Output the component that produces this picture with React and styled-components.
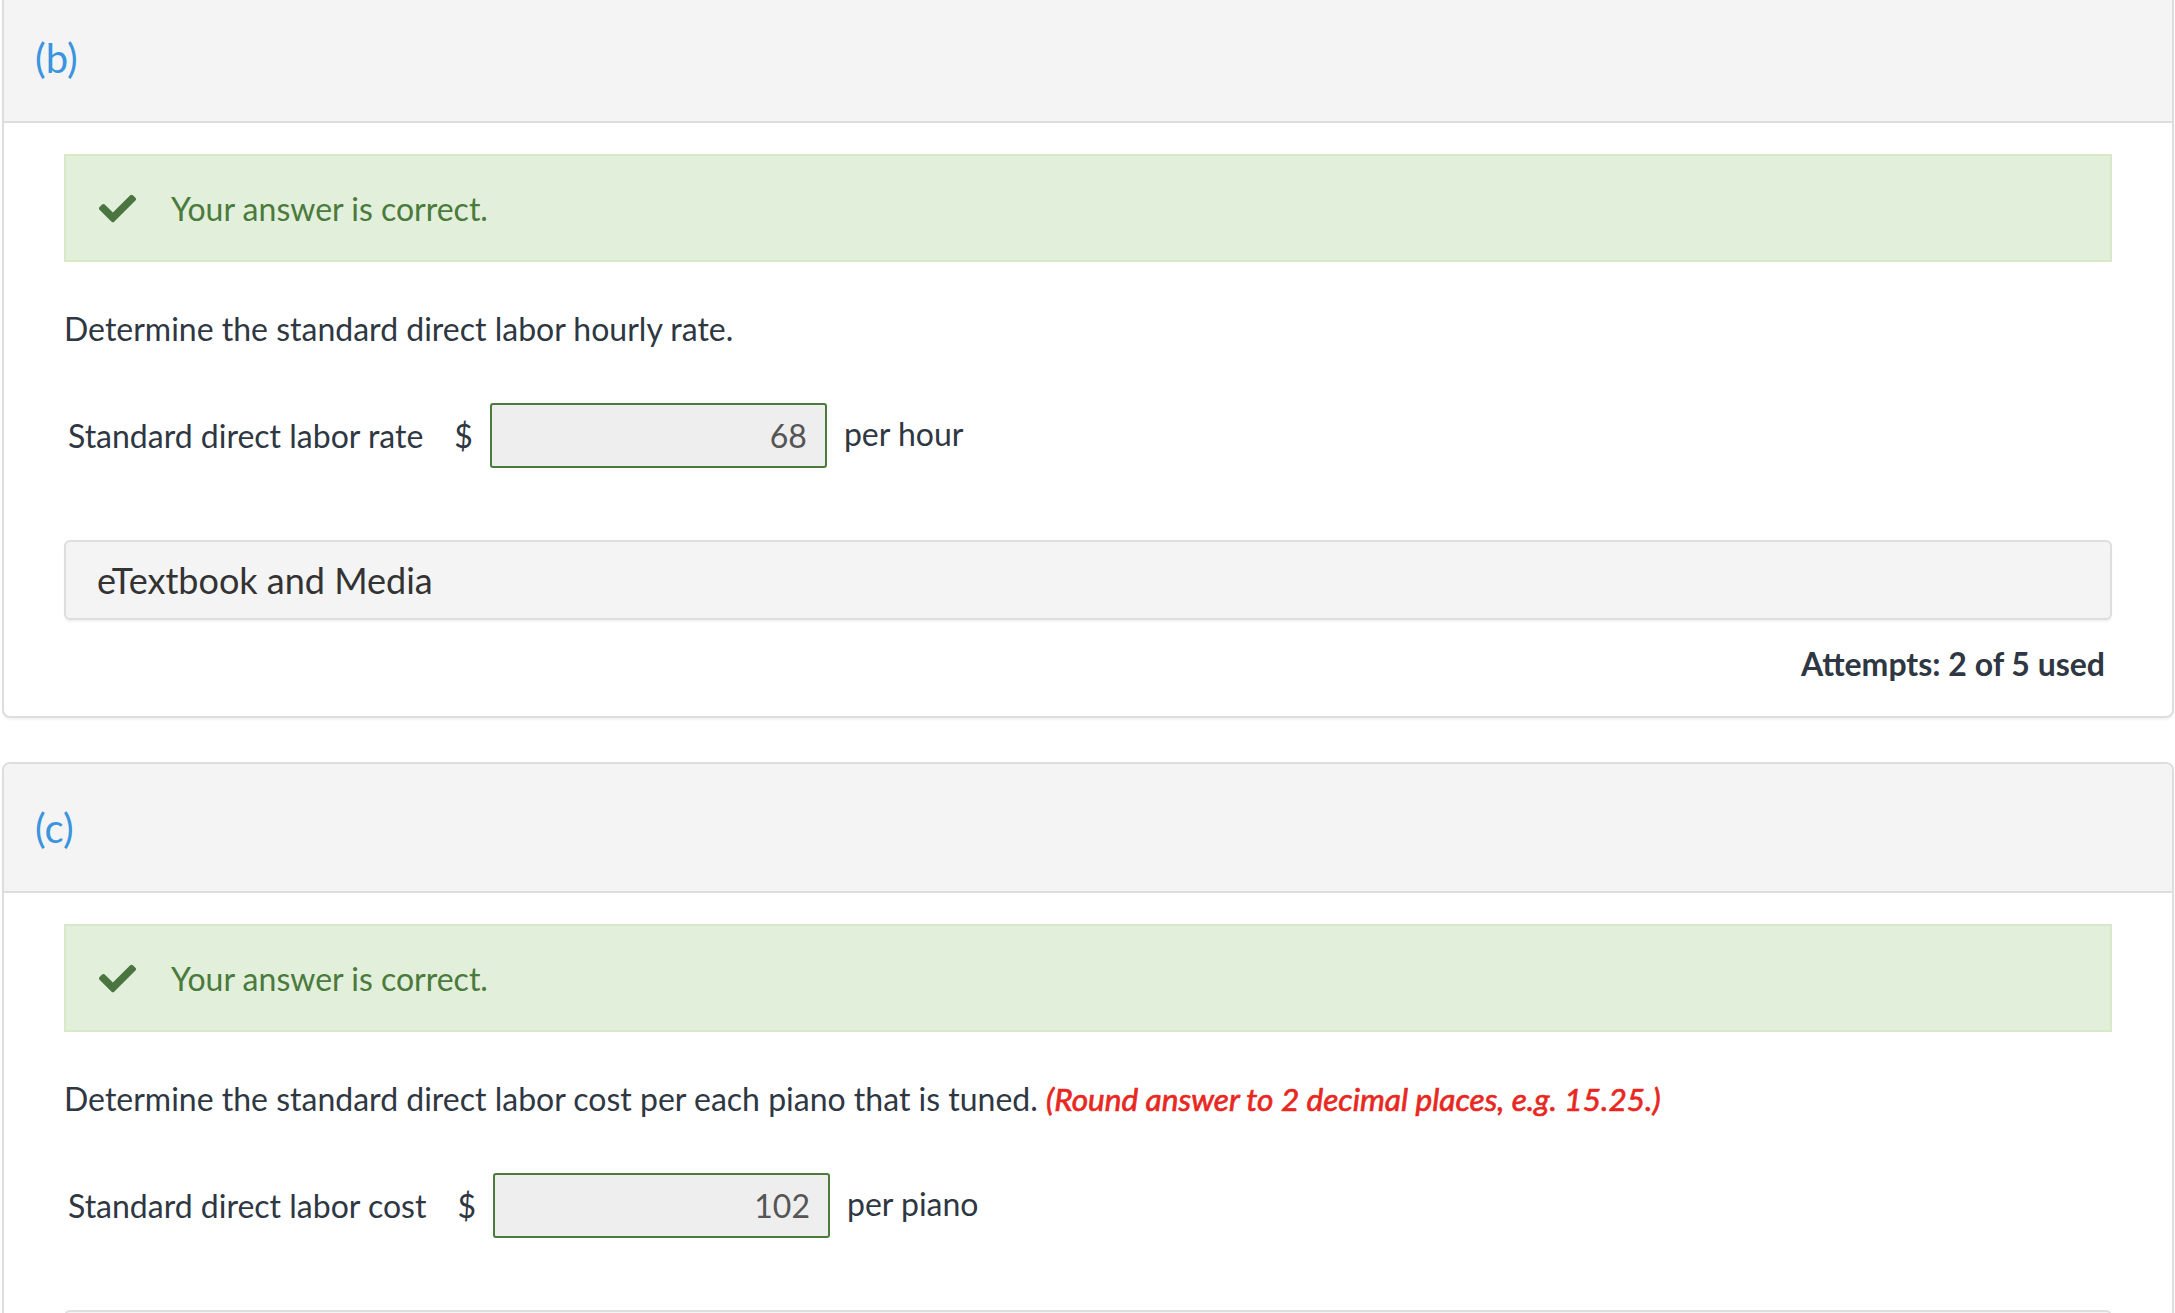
import React from "react";
import styled, { createGlobalStyle } from "styled-components";
import { FaCheck } from "react-icons/fa";

const GlobalStyle = createGlobalStyle`
body{
margin: 0;
background: #fff;
font-family: Lato, "Open Sans", sans-serif;
color: #2e3742;
}
`

const Page = styled.div`
padding: 0 1px 0 2px;
display: flex;
flex-direction: column;
gap: 44px;
`

const Card = styled.section`
border: 2px solid #dddddd;
border-radius: 8px;
overflow: hidden;
box-shadow: 0 2px 2px rgba(0, 0, 0, 0.05);
flex-shrink: 0;
&:first-child{
margin-top: -8px;
}
`

const CardHeader = styled.div`
height: 127px;
background: #f4f4f4;
border-bottom: 2px solid #dddddd;
display: flex;
align-items: center;
padding: 0 31px;
font-size: 40px;
color: #3a94e0;
`

const CardBody = styled.div`
padding: 31px 60px 30px 60px;
`

const Alert = styled.div`
box-sizing: border-box;
height: 108px;
background: #e2efda;
border: 2px solid #d6e9c8;
display: flex;
align-items: center;
gap: 35px;
padding-left: 33px;
font-size: 32px;
color: #4a7a3c;
>svg{
color: #4a7440;
}
`

const Question = styled.p`
margin: 45px 0 0 0;
font-size: 32px;
line-height: 44px;
`

const Hint = styled.em`
color: #e8281f;
font-weight: 400;
font-size: 31.6px;
-webkit-text-stroke: 0.7px #e8281f;
`

const AnswerRow = styled.div`
margin-top: 52px;
padding-left: 4px;
display: flex;
align-items: center;
font-size: 32px;
`

const Label = styled.span`
margin-right: 31px;
`

const Currency = styled.span`
margin-right: 17px;
`

const Unit = styled.span`
margin-top: -4px;
`

const AnswerInput = styled.input`
box-sizing: border-box;
width: 337px;
height: 65px;
border: 2px solid #4b7a3d;
border-radius: 3px;
background: #eeeeee;
font-family: Lato, sans-serif;
font-size: 32px;
color: #555;
text-align: right;
padding: 0 18px 0 10px;
margin-right: 17px;
`

const MediaBox = styled.div`
box-sizing: border-box;
margin-top: 72px;
height: 80px;
background: #f4f4f4;
border: 2px solid #dedede;
border-radius: 6px;
box-shadow: 0 2px 2px rgba(0, 0, 0, 0.05);
display: flex;
align-items: center;
padding-left: 31px;
font-size: 36px;
color: #333;
`

const Attempts = styled.div`
margin-top: 22px;
padding-right: 7px;
text-align: right;
font-size: 32px;
line-height: 44px;
font-weight: 700;
`

const parts = [
    {
        letter: "b",
        question: "Determine the standard direct labor hourly rate.",
        label: "Standard direct labor rate",
        value: "68",
        unit: "per hour",
    },
    {
        letter: "c",
        question: "Determine the standard direct labor cost per each piano that is tuned.",
        hint: "(Round answer to 2 decimal places, e.g. 15.25.)",
        label: "Standard direct labor cost",
        value: "102",
        unit: "per piano",
    },
]

function Part({ part }){
    return(
        <Card>
            <CardHeader>({part.letter})</CardHeader>
            <CardBody>
                <Alert>
                    <FaCheck size={37}/>
                    <span>Your answer is correct.</span>
                </Alert>

                <Question>
                    {part.question}
                    {part.hint && <> <Hint>{part.hint}</Hint></>}
                </Question>

                <AnswerRow>
                    <Label>{part.label}</Label>
                    <Currency>$</Currency>
                    <AnswerInput defaultValue={part.value} readOnly/>
                    <Unit>{part.unit}</Unit>
                </AnswerRow>

                <MediaBox>eTextbook and Media</MediaBox>

                <Attempts>Attempts: 2 of 5 used</Attempts>
            </CardBody>
        </Card>
    )
}

export default function App(){
    return(
        <>
            <GlobalStyle/>
            <Page>
                {parts.map(p => <Part key={p.letter} part={p}/>)}
            </Page>
        </>
    )
}
